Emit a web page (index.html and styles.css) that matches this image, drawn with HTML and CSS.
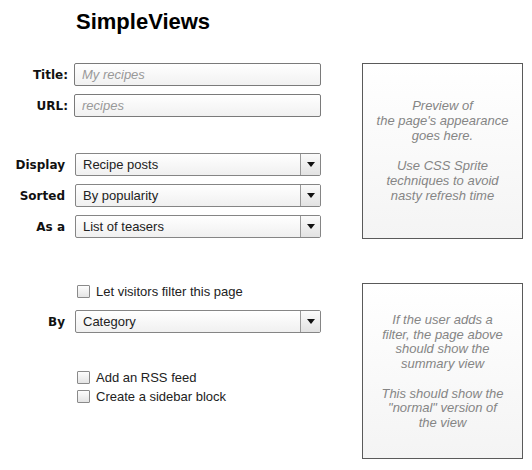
FILE: index.html
```html
<!DOCTYPE html>
<html lang="en">
<head>
    <meta charset="UTF-8">
    <meta name="viewport" content="width=device-width, initial-scale=1.0">
    <title>SimpleViews</title>
    <link rel="stylesheet" href="styles.css">
</head>
<body>
    <h1>SimpleViews</h1>

    <!-- Basic settings -->
    <div class="section first">
        <div class="form">
            <div class="field text-field">
                <label>Title:</label>
                <input type="text" placeholder="My recipes">
            </div>
            <div class="field text-field">
                <label>URL:</label>
                <input type="text" placeholder="recipes">
            </div>

            <div class="group">
                <div class="field">
                    <label>Display</label>
                    <div class="select"><span class="value">Recipe posts</span><span class="arrow"></span></div>
                </div>
                <div class="field">
                    <label>Sorted</label>
                    <div class="select"><span class="value">By popularity</span><span class="arrow"></span></div>
                </div>
                <div class="field">
                    <label>As a</label>
                    <div class="select"><span class="value">List of teasers</span><span class="arrow"></span></div>
                </div>
            </div>
        </div>

        <div class="preview preview-top">
            Preview of<br>the page's appearance<br>goes here.<br><br>Use CSS Sprite<br>techniques to avoid<br>nasty refresh time
        </div>
    </div>

    <!-- Filters and extras -->
    <div class="section">
        <div class="form">
            <label class="check first-check"><input type="checkbox"> Let visitors filter this page</label>
            <div class="field by-field">
                <label>By</label>
                <div class="select"><span class="value">Category</span><span class="arrow"></span></div>
            </div>

            <div class="checks">
                <label class="check"><input type="checkbox"> Add an RSS feed</label>
                <label class="check"><input type="checkbox"> Create a sidebar block</label>
            </div>
        </div>

        <div class="preview preview-bottom">
            If the user adds a<br>filter, the page above<br>should show the<br>summary view<br><br>This should show the<br>"normal" version of<br>the view
        </div>
    </div>
</body>
</html>
```

FILE: styles.css
```css
/* Basic Reset */
* {
    margin: 0;
    padding: 0;
    box-sizing: border-box;
}

body {
    font-family: 'Liberation Sans', Arial, sans-serif;
    font-size: 13px;
    color: #222;
    background-color: #fff;
}

h1 {
    font-size: 22px;
    line-height: 25px;
    font-weight: bold;
    color: #000;
    padding: 9px 0 0 76px;
}

/* Two blocks: form on the left, preview on the right */
.section {
    display: flex;
    gap: 41px;
    margin-top: 44px;
}

.section.first {
    margin-top: 29px;
}

.form {
    width: 321px;
    display: flex;
    flex-direction: column;
    gap: 8px;
}

.group {
    display: flex;
    flex-direction: column;
    gap: 8px;
    margin-top: 28px;
}

/* Label + control rows */
.field {
    display: flex;
    align-items: center;
}

.field label {
    width: 66px;
    padding-right: 1px;
    text-align: right;
    font-family: 'DejaVu Sans', Verdana, sans-serif;
    font-size: 12px;
    font-weight: bold;
    color: #111;
    margin-right: 9px;
}

.text-field label {
    width: 68px;
    padding-right: 0;
    margin-right: 6px;
}

input[type="text"] {
    flex: 1;
    height: 23px;
    border: 1px solid #7a7a7a;
    border-radius: 2px;
    background: linear-gradient(#ffffff, #f1f1f1);
    padding: 0 7px;
    font-family: 'Liberation Sans', Arial, sans-serif;
    font-size: 13px;
    outline: none;
}

input[type="text"]::placeholder {
    color: #999;
    font-style: italic;
}

/* Fake drop-down */
.select {
    flex: 1;
    height: 23px;
    display: flex;
    border: 1px solid #858585;
    border-radius: 2px;
    background: linear-gradient(#ffffff, #f0f0f0);
}

.select .value {
    flex: 1;
    padding-left: 7px;
    line-height: 21px;
    color: #222;
}

.select .arrow {
    width: 20px;
    border-left: 1px solid #999;
    background: linear-gradient(#fbfbfb, #e2e2e2);
    display: flex;
    align-items: center;
    justify-content: center;
}

.select .arrow::after {
    content: "";
    border-left: 4px solid transparent;
    border-right: 4px solid transparent;
    border-top: 5px solid #111;
}

/* Checkboxes */
.check {
    display: flex;
    align-items: center;
    height: 17px;
    padding-left: 77px;
    gap: 6px;
    color: #222;
}

.first-check {
    margin-top: 0;
}

.by-field {
    margin-top: 2px;
}

.checks {
    display: flex;
    flex-direction: column;
    gap: 2px;
    margin-top: 28px;
}

input[type="checkbox"] {
    appearance: none;
    width: 13px;
    height: 13px;
    border: 1px solid #8a8a8a;
    border-radius: 1px;
    background: linear-gradient(#fdfdfd, #e4e4e4);
}

/* Preview boxes */
.preview {
    width: 161px;
    height: 176px;
    border: 1px solid #5a5a5a;
    background: linear-gradient(#ffffff, #f4f4f4);
    text-align: center;
    font-style: italic;
    color: #858585;
    line-height: 15px;
}

.preview-top {
    padding-top: 34px;
}

.preview-bottom {
    padding-top: 29px;
    line-height: 14.7px;
}
```
